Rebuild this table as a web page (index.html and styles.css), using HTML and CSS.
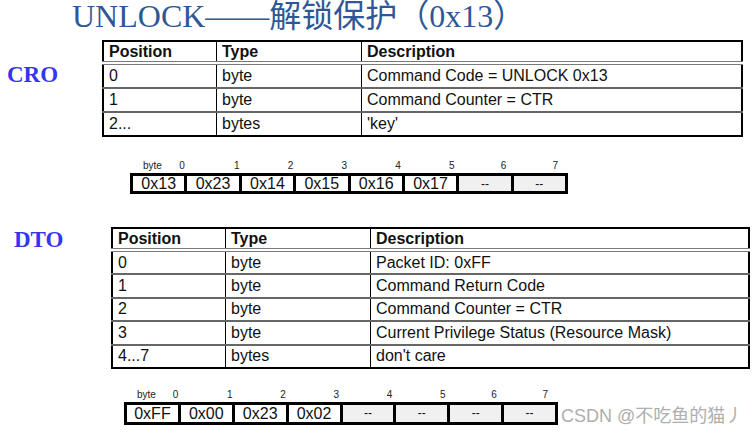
FILE: index.html
```html
<!DOCTYPE html>
<html lang="zh">
<head>
<meta charset="utf-8">
<title>UNLOCK</title>
<link rel="stylesheet" href="styles.css">
</head>
<body>
<h1 class="title">UNLOCK——解锁保护（0x13）</h1>

<section class="msg msg-cro">
  <div class="tag">CRO</div>
  <table class="spec spec-cro">
    <thead>
      <tr><th class="c-pos">Position</th><th class="c-type">Type</th><th>Description</th></tr>
    </thead>
    <tbody>
      <tr><td>0</td><td>byte</td><td>Command Code = UNLOCK 0x13</td></tr>
      <tr><td>1</td><td>byte</td><td>Command Counter = CTR</td></tr>
      <tr><td>2...</td><td>bytes</td><td>'key'</td></tr>
    </tbody>
  </table>
</section>

<div class="bytes bytes-cro">
  <div class="byte-labels">
    <span class="lbl lbl-first"><span class="lbl-word">byte</span>0</span>
    <span class="lbl">1</span><span class="lbl">2</span><span class="lbl">3</span>
    <span class="lbl">4</span><span class="lbl">5</span><span class="lbl">6</span><span class="lbl">7</span>
  </div>
  <div class="byte-line">
    <div class="cells">
      <span class="cell">0x13</span><span class="cell">0x23</span><span class="cell">0x14</span><span class="cell">0x15</span>
      <span class="cell">0x16</span><span class="cell">0x17</span><span class="cell cell-empty">--</span><span class="cell cell-empty">--</span>
    </div>
  </div>
</div>

<section class="msg msg-dto">
  <div class="tag">DTO</div>
  <table class="spec spec-dto">
    <thead>
      <tr><th class="c-pos">Position</th><th class="c-type">Type</th><th>Description</th></tr>
    </thead>
    <tbody>
      <tr><td>0</td><td>byte</td><td>Packet ID: 0xFF</td></tr>
      <tr><td>1</td><td>byte</td><td>Command Return Code</td></tr>
      <tr><td>2</td><td>byte</td><td>Command Counter = CTR</td></tr>
      <tr><td>3</td><td>byte</td><td>Current Privilege Status (Resource Mask)</td></tr>
      <tr><td>4...7</td><td>bytes</td><td>don't care</td></tr>
    </tbody>
  </table>
</section>

<div class="bytes bytes-dto">
  <div class="byte-labels">
    <span class="lbl lbl-first"><span class="lbl-word">byte</span>0</span>
    <span class="lbl">1</span><span class="lbl">2</span><span class="lbl">3</span>
    <span class="lbl">4</span><span class="lbl">5</span><span class="lbl">6</span><span class="lbl">7</span>
  </div>
  <div class="byte-line">
    <div class="cells">
      <span class="cell">0xFF</span><span class="cell">0x00</span><span class="cell">0x23</span><span class="cell">0x02</span>
      <span class="cell cell-empty">--</span><span class="cell cell-empty">--</span><span class="cell cell-empty">--</span><span class="cell cell-empty">--</span>
    </div>
    <span class="wm">CSDN @不吃鱼的猫丿</span>
  </div>
</div>
</body>
</html>
```

FILE: styles.css
```css
html, body {
  margin: 0;
  padding: 0;
  background: #fff;
}
body {
  font-family: "Liberation Sans", Arial, "Noto Sans CJK SC", sans-serif;
  color: #111;
  width: 753px;
  height: 437px;
  overflow: hidden;
}

.title {
  margin: 0;
  padding-left: 72px;
  height: 32px;
  font-family: "Liberation Serif", "Noto Sans CJK SC", serif;
  font-weight: normal;
  font-size: 32px;
  line-height: 32px;
  color: #2f5796;
  white-space: nowrap;
}

.msg {
  display: flex;
  align-items: flex-start;
}
.msg-cro {
  margin-top: 8px;
  padding-left: 7px;
}
.msg-cro .tag {
  width: 95px;
  margin-top: 23px;
}
.msg-dto {
  margin-top: 33px;
  padding-left: 14px;
}
.msg-dto .tag {
  width: 97px;
  margin-top: 1px;
}
.tag {
  flex: none;
  font-family: "Liberation Serif", serif;
  font-weight: bold;
  font-size: 23px;
  line-height: 23px;
  color: #3535ef;
}

.spec {
  border-collapse: collapse;
  border: 2px solid #000;
  font-size: 16px;
  line-height: 16px;
  color: #111;
  background: #fff;
}
.spec-cro { width: 641px; }
.spec-dto { width: 639px; }
.spec .c-pos { width: 102px; }
.spec .c-type { width: 134px; }
.spec-dto .c-type { width: 134px; }

.spec th,
.spec td {
  text-align: left;
  padding: 0 5px;
  vertical-align: middle;
  white-space: nowrap;
}
.spec th {
  height: 19px;
  font-weight: bold;
  border-bottom: 4px double #7a7a7a;
}
.spec td {
  height: 22px;
  font-weight: normal;
  border-bottom: 2px solid #666;
}
.spec tbody tr:last-child td {
  border-bottom: 2px solid #000;
}
.spec th + th,
.spec td + td {
  border-left: 1px solid #000;
}
.spec-dto td {
  height: 21.4px;
}

.bytes-cro {
  margin-top: 23px;
  padding-left: 130px;
}
.bytes-dto {
  margin-top: 20px;
  padding-left: 124px;
}

.byte-labels {
  display: flex;
  gap: 3px;
  padding: 0 3px;
  height: 13px;
  font-size: 10px;
  line-height: 12px;
  color: #222;
}
.bytes-cro .byte-labels { width: 438px; box-sizing: border-box; }
.bytes-dto .byte-labels { width: 434px; box-sizing: border-box; }

.lbl {
  flex: 1;
  text-align: right;
  padding-right: 9px;
}
.lbl:nth-child(n+6) {
  padding-right: 7px;
}
.lbl-first {
  display: flex;
  justify-content: space-between;
  padding-left: 10px;
  padding-right: 10px;
}

.byte-line {
  display: flex;
  align-items: flex-end;
}
.cells {
  display: flex;
  gap: 3px;
  border: 3px solid #000;
  background: #000;
  box-sizing: border-box;
}
.bytes-cro .cells { width: 438px; height: 21px; }
.bytes-dto .cells { width: 434px; height: 23px; }

.cell {
  flex: 1;
  background: #fff;
  text-align: center;
  font-size: 16px;
  line-height: 16px;
  color: #111;
}
.bytes-dto .cell { line-height: 17px; }
.cell-empty {
  background: #f0f0f0;
  font-size: 12px;
}

.wm {
  margin-left: 3px;
  margin-bottom: -2px;
  font-family: "Liberation Sans", "Noto Sans CJK SC", sans-serif;
  font-size: 18px;
  line-height: 22px;
  color: #aeaeae;
  white-space: nowrap;
}
```
